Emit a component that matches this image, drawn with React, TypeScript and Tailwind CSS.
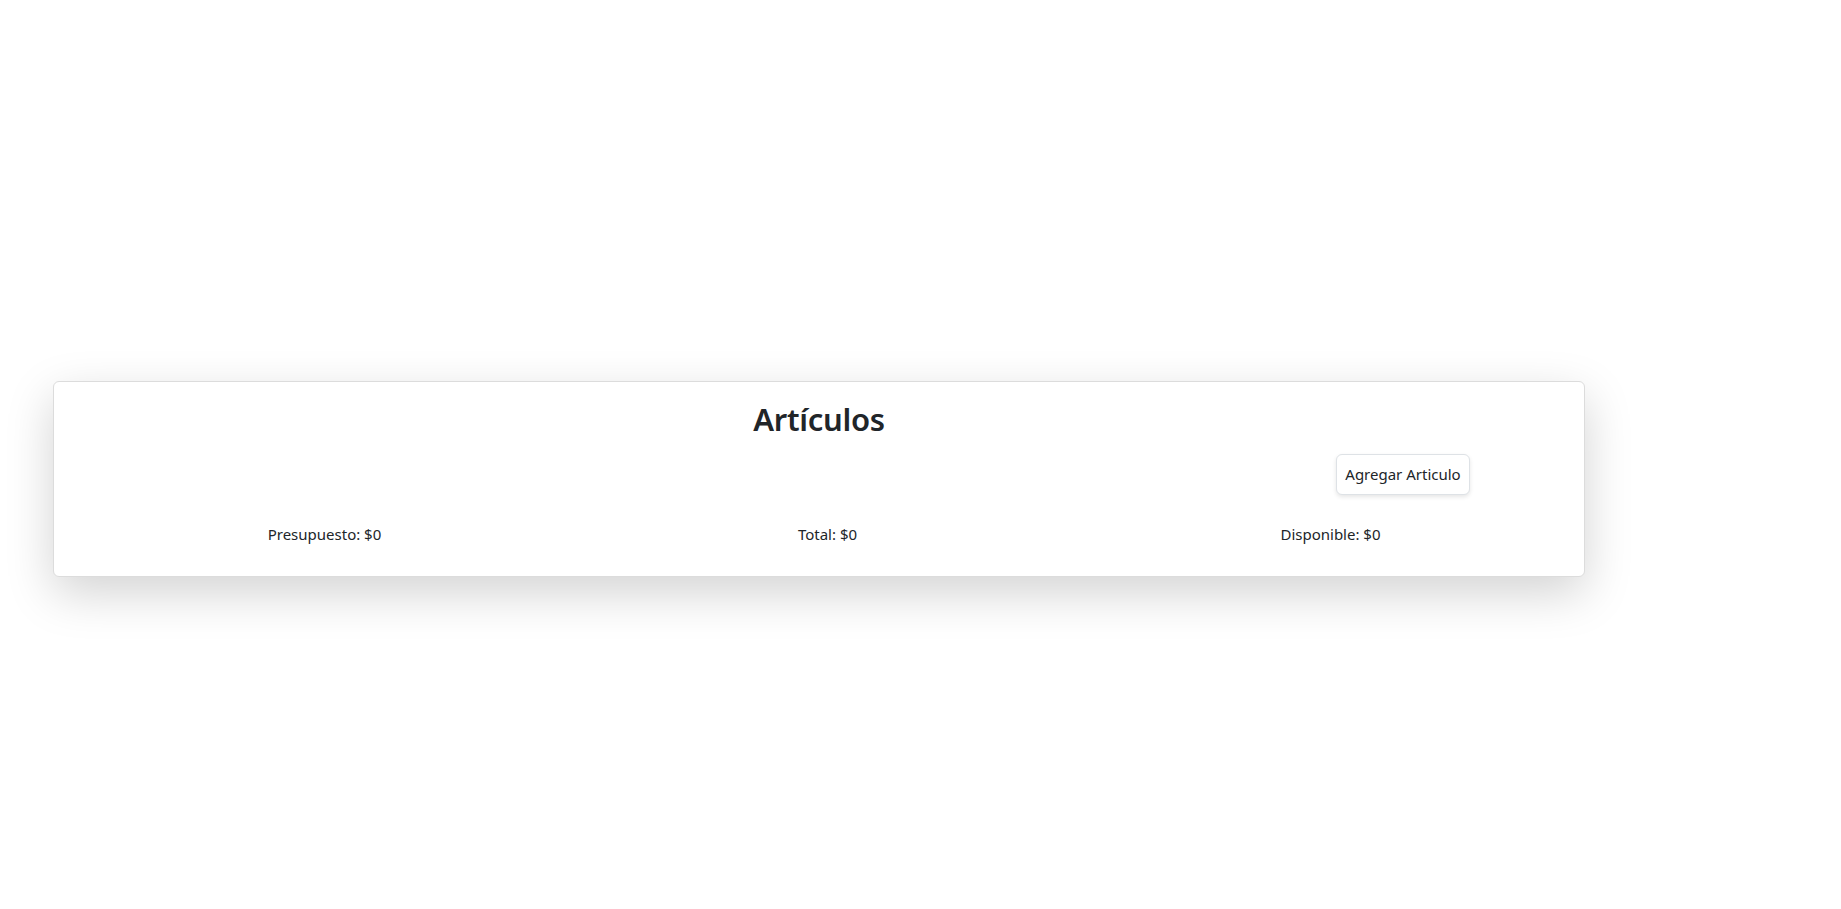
export default function App() {
  return (
    <div
      className="min-h-screen w-full bg-white text-[#212529]"
      style={{ fontFamily: '"Noto Sans", "Open Sans", sans-serif' }}
    >
      <div className="pt-[381px] pl-[53px]">
        <div className="w-[1532px] h-[196px] rounded-[6px] border border-[#dcdcdc] bg-white shadow-[0_16px_48px_rgba(0,0,0,0.175)]">
          <h2 className="pt-[18px] text-center text-[31px] font-semibold leading-[38px] tracking-[-0.3px]">
            Artículos
          </h2>
          <div className="mt-[16px] flex justify-end pr-[114px]">
            <button className="h-[41px] w-[134px] rounded-[6px] border border-[#dee2e6] bg-white text-[15px] text-[#212529] shadow-[0_2px_4px_rgba(0,0,0,0.1)]">
              Agregar Articulo
            </button>
          </div>
          <div className="mt-[27px] grid grid-cols-[503px_503px_503px] pl-[19px] text-[15px] leading-[24px]">
            <div className="text-center">Presupuesto: $0</div>
            <div className="text-center">Total: $0</div>
            <div className="text-center">Disponible: $0</div>
          </div>
        </div>
      </div>
    </div>
  );
}
